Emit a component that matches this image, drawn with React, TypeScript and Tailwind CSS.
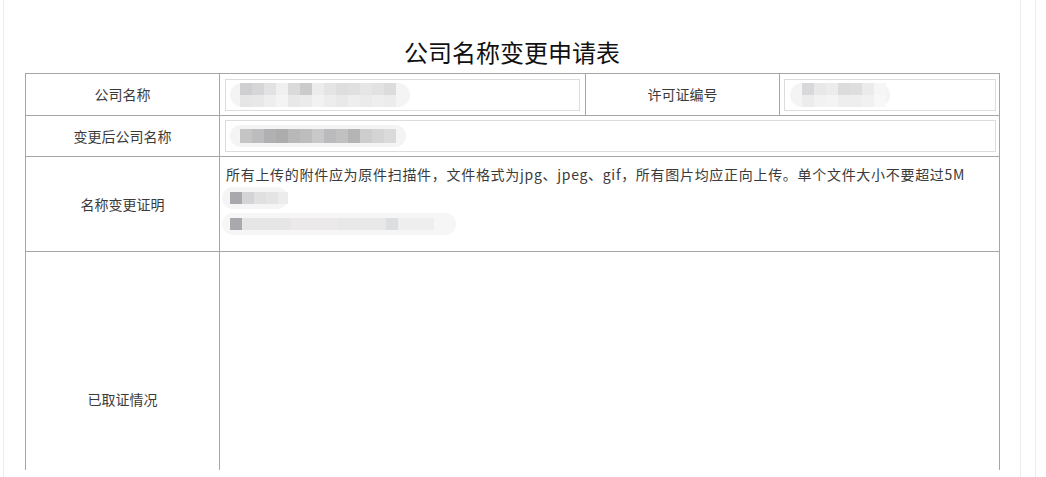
import React from "react";

const cellBorder = "border-r border-b border-[#a6a6a6]";

type Block = { w: number; c: string };

const Smudge: React.FC<{ top: Block[]; bottom?: Block[]; pad?: number; h: number; pillW: number }> = ({
  top,
  bottom,
  pad = 10,
  h,
  pillW,
}) => (
  <div
    className="flex flex-col justify-center rounded-full bg-[#f4f4f4]"
    style={{ width: pillW, height: h, paddingLeft: pad }}
  >
    <div className="flex">
      {top.map((b, i) => (
        <div key={i} style={{ width: b.w, height: bottom ? h / 2 : 14, background: b.c }} />
      ))}
    </div>
    {bottom && (
      <div className="flex">
        {bottom.map((b, i) => (
          <div key={i} style={{ width: b.w, height: h / 2, background: b.c }} />
        ))}
      </div>
    )}
  </div>
);

const Label: React.FC<{ text: string; h: number }> = ({ text, h }) => (
  <div className={`${cellBorder} flex items-center justify-center text-[14px] text-[#3a3a3a]`} style={{ height: h }}>
    {text}
  </div>
);

export default function App() {
  return (
    <div
      className="relative h-[477px] w-[1046px] overflow-hidden bg-white"
      style={{ fontFamily: '"Noto Sans CJK SC", "Noto Sans", sans-serif' }}
    >
      <div className="ml-[3px] h-[477px] w-[1018px] border-x border-[#ececec]">
        <div className="h-[73px] pt-[37px] text-center text-[24px] leading-[30px] text-[#111]">
          公司名称变更申请表
        </div>
        <div className="ml-[21px] h-[397px] w-[975px] overflow-hidden">
          <div className="grid grid-cols-[194px_366px_194px_220px] border-l border-t border-[#a6a6a6]">
            {/* row 1 */}
            <Label text="公司名称" h={42} />
            <div className={`${cellBorder} h-[42px] px-[5px] pt-[5px]`}>
              <div className="flex h-[32px] w-[355px] items-center border border-[#dcdcdc] pl-[4px]">
                <Smudge
                  h={24}
                  pillW={180}
                  top={[
                    { w: 12, c: "#cfcfd1" },
                    { w: 12, c: "#d6d6d8" },
                    { w: 12, c: "#e2e2e2" },
                    { w: 12, c: "#f0f0f0" },
                    { w: 12, c: "#dadada" },
                    { w: 12, c: "#cbcbcb" },
                    { w: 12, c: "#ececec" },
                    { w: 12, c: "#e4e4e4" },
                    { w: 12, c: "#dedede" },
                    { w: 12, c: "#e0e0e0" },
                    { w: 12, c: "#e6e6e6" },
                    { w: 12, c: "#e2e2e2" },
                    { w: 12, c: "#dcdcdc" },
                  ]}
                  bottom={[
                    { w: 12, c: "#e6e6e6" },
                    { w: 12, c: "#e8e8e8" },
                    { w: 12, c: "#eeeeee" },
                    { w: 12, c: "#f4f4f4" },
                    { w: 12, c: "#e8e8e8" },
                    { w: 12, c: "#ebebeb" },
                    { w: 12, c: "#f2f2f2" },
                    { w: 12, c: "#ededed" },
                    { w: 12, c: "#e9e9e9" },
                    { w: 12, c: "#eeeeee" },
                    { w: 12, c: "#ebebeb" },
                    { w: 12, c: "#eeeeee" },
                    { w: 12, c: "#ececec" },
                  ]}
                />
              </div>
            </div>
            <Label text="许可证编号" h={42} />
            <div className={`${cellBorder} h-[42px] pl-[4px] pr-[3px] pt-[5px]`}>
              <div className="flex h-[32px] w-[212px] items-center border border-[#dcdcdc] pl-[5px]">
                <Smudge
                  h={24}
                  pillW={100}
                  pad={12}
                  top={[
                    { w: 12, c: "#d8d8da" },
                    { w: 12, c: "#e8e8e8" },
                    { w: 12, c: "#ececec" },
                    { w: 12, c: "#dcdcdc" },
                    { w: 12, c: "#dedede" },
                    { w: 12, c: "#ebebeb" },
                    { w: 12, c: "#f6f6f6" },
                  ]}
                  bottom={[
                    { w: 12, c: "#ececec" },
                    { w: 12, c: "#f2f2f2" },
                    { w: 12, c: "#f4f4f4" },
                    { w: 12, c: "#eeeeee" },
                    { w: 12, c: "#eeeeee" },
                    { w: 12, c: "#f1f1f1" },
                    { w: 12, c: "#f8f8f8" },
                  ]}
                />
              </div>
            </div>

            {/* row 2 */}
            <Label text="变更后公司名称" h={41} />
            <div className={`col-span-3 ${cellBorder} h-[41px] pl-[5px] pr-[3px] pt-[4px]`}>
              <div className="flex h-[32px] w-[771px] items-center border border-[#dcdcdc] pl-[4px]">
                <Smudge
                  h={22}
                  pillW={176}
                  top={[
                    { w: 12, c: "#c4c4c4" },
                    { w: 12, c: "#bcbcbe" },
                    { w: 12, c: "#b0b0b0" },
                    { w: 12, c: "#acacac" },
                    { w: 12, c: "#b8b8b8" },
                    { w: 12, c: "#bdbdbd" },
                    { w: 12, c: "#c8c8c8" },
                    { w: 12, c: "#bababc" },
                    { w: 12, c: "#c0c0c0" },
                    { w: 12, c: "#b4b4b4" },
                    { w: 12, c: "#cdcdcd" },
                    { w: 12, c: "#d4d4d4" },
                    { w: 12, c: "#dadada" },
                  ]}
                />
              </div>
            </div>

            {/* row 3 */}
            <Label text="名称变更证明" h={95} />
            <div className={`col-span-3 ${cellBorder} h-[95px] pl-[6px] pt-[7px] text-[14px] leading-[20px] text-[#3a3a3a]`}>
              <div className="tracking-[0.7px]">
                所有上传的附件应为原件扫描件，文件格式为jpg、jpeg、gif，所有图片均应正向上传。单个文件大小不要超过5M
              </div>
              <div className="-ml-[4px] mt-[3px] flex h-[22px] w-[66px] items-center rounded-full bg-[#f5f5f5] pl-[8px]">
                <div className="h-[12px] w-[12px] bg-[#a9a9ad]" />
                <div className="h-[12px] w-[12px] bg-[#d4d4d6]" />
                <div className="h-[12px] w-[12px] bg-[#e0e0e0]" />
                <div className="h-[12px] w-[12px] bg-[#e4e4e4]" />
                <div className="h-[12px] w-[10px] bg-[#ececec]" />
              </div>
              <div className="-ml-[4px] mt-[4px] flex h-[22px] w-[234px] items-center rounded-full bg-[#f6f6f6] pl-[8px]">
                <div className="h-[12px] w-[12px] bg-[#a9a9ad]" />
                <div className="h-[12px] w-[48px] bg-[#e6e6e6]" />
                <div className="h-[12px] w-[48px] bg-[#ebe9e9]" />
                <div className="h-[12px] w-[48px] bg-[#e8e8e8]" />
                <div className="h-[12px] w-[12px] bg-[#dcdfe2]" />
                <div className="h-[12px] w-[36px] bg-[#eeeeee]" />
              </div>
            </div>

            {/* row 4 */}
            <Label text="已取证情况" h={296} />
            <div className={`col-span-3 ${cellBorder} h-[296px]`} />
          </div>
        </div>
      </div>
      <div className="absolute left-[1035px] top-0 h-[477px] w-px bg-[#ececec]" />
    </div>
  );
}
